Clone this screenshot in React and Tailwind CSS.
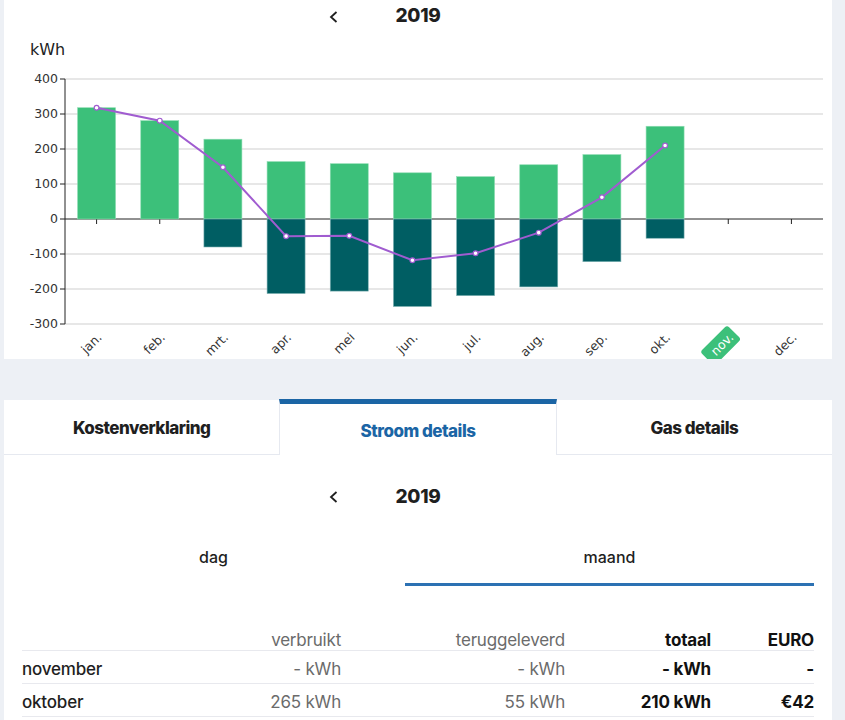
import React from 'react';

const months = ['jan.', 'feb.', 'mrt.', 'apr.', 'mei', 'jun.', 'jul.', 'aug.', 'sep.', 'okt.', 'nov.', 'dec.'];

// monthly kWh: used (up), returned (down)
const used = [318, 281, 228, 164, 158, 132, 121, 155, 184, 265];
const returned = [0, 0, 80, 213, 206, 250, 219, 194, 122, 55];

const X0 = 65;
const X1 = 823;
const SLOT = (X1 - X0) / 12;
const yOf = (v) => 219 - v * 0.35;
const cx = (i) => X0 + SLOT * (i + 0.5);

const font = { fontFamily: '"DejaVu Sans", sans-serif' };

const Chevron = ({ className }) => (
  <svg width="10" height="12" viewBox="0 0 10 12" className={className}>
    <polyline points="7.5,1 2,6 7.5,11" fill="none" stroke="#1f1f1f" strokeWidth="1.8" />
  </svg>
);

const YearNav = () => (
  <div className="flex items-center justify-center gap-[56px]">
    <Chevron />
    <span className="font-['Inter',sans-serif] text-[19px] font-extrabold tracking-[-0.3px] text-[#1f1f1f]">2019</span>
    <span className="invisible w-[10px]" />
  </div>
);

const Chart = () => {
  const net = used.map((u, i) => u - returned[i]);
  const ticks = [400, 300, 200, 100, 0, -100, -200, -300];
  return (
    <svg width="828" height="327" viewBox="4 32 828 327" style={font}>
      <text x="30" y="55" fontSize="16" fill="#222">kWh</text>
      {ticks.map((t) => (
        <g key={t}>
          <line x1={X0} x2={X1} y1={yOf(t)} y2={yOf(t)} stroke={t === 0 ? '#222' : '#cfcfcf'} strokeWidth="1" />
          <line x1={X0 - 5} x2={X0} y1={yOf(t)} y2={yOf(t)} stroke="#222" />
          <text x={X0 - 7} y={yOf(t)} dy="0.35em" textAnchor="end" fontSize="12.5" fill="#333">{t}</text>
        </g>
      ))}
      <line x1={X0} x2={X0} y1={yOf(400)} y2={yOf(-300)} stroke="#222" />
      {months.map((m, i) => (
        <line key={m} x1={cx(i)} x2={cx(i)} y1={219} y2={224} stroke="#222" />
      ))}
      {used.map((u, i) => (
        <g key={i}>
          <rect x={cx(i) - 19} y={yOf(u)} width="38" height={u * 0.35} fill="#3cc07a" stroke="#8fdcb3" strokeWidth="0.6" />
          {returned[i] > 0 && (
            <rect x={cx(i) - 19} y={219} width="38" height={returned[i] * 0.35} fill="#005e63" stroke="#7fb2b4" strokeWidth="0.6" />
          )}
        </g>
      ))}
      <polyline
        points={net.map((v, i) => `${cx(i)},${yOf(v)}`).join(' ')}
        fill="none"
        stroke="#a05cd0"
        strokeWidth="2"
      />
      {net.map((v, i) => (
        <circle key={i} cx={cx(i)} cy={yOf(v)} r="2.4" fill="#fff" stroke="#a05cd0" strokeWidth="1.2" />
      ))}
      {months.map((m, i) => (
        <g key={m} transform={`translate(${cx(i) + 3}, 335) rotate(-45)`}>
          {m === 'nov.' && <rect x="-34" y="-10" width="38" height="20" rx="3" fill="#3cc07a" />}
          <text x="0" y="0" dy="0.35em" textAnchor="end" fontSize="12.5" fill={m === 'nov.' ? '#fff' : '#333'}>
            {m}
          </text>
        </g>
      ))}
    </svg>
  );
};

const rows = [
  { label: 'november', used: '- kWh', ret: '- kWh', total: '- kWh', euro: '-' },
  { label: 'oktober', used: '265 kWh', ret: '55 kWh', total: '210 kWh', euro: '€42' },
];

const tabText = 'text-[17px] font-extrabold tracking-[-0.5px]';

export default function App() {
  return (
    <div className="min-h-[720px] bg-[#edf0f5] pl-[4px] pr-[13px] font-['Inter',sans-serif]">
      {/* chart panel */}
      <div className="bg-white">
        <div className="flex h-[32px] items-center justify-center pt-[1px]">
          <YearNav />
        </div>
        <Chart />
      </div>

      {/* tabs */}
      <div className="mt-[40px] flex h-[56px] items-end">
        <div className={`flex h-[55px] flex-1 items-center justify-center border-b border-[#e6e9f0] bg-white pt-[3px] text-[#1f1f1f] ${tabText}`}>
          Kostenverklaring
        </div>
        <div className={`flex h-[56px] flex-1 items-center justify-center border-x border-t-[5px] border-x-[#e6e9f0] border-t-[#1b65a5] bg-white pt-[4px] text-[#1b65a5] ${tabText}`}>
          Stroom details
        </div>
        <div className={`flex h-[55px] flex-1 items-center justify-center border-b border-[#e6e9f0] bg-white pt-[3px] text-[#1f1f1f] ${tabText}`}>
          Gas details
        </div>
      </div>

      {/* details panel */}
      <div className="bg-white pb-[20px] pl-[18px] pr-[18px] pt-[27px]">
        <div className="flex h-[30px] items-center justify-center">
          <YearNav />
        </div>

        <div className="mt-[18px] flex">
          <div className="flex h-[56px] w-[383px] items-center justify-center border-b-[3px] border-transparent text-[16px] font-medium text-[#1f1f1f]">
            dag
          </div>
          <div className="flex h-[56px] flex-1 items-center justify-center border-b-[3px] border-[#2c71b3] text-[16px] font-medium text-[#1f1f1f]">
            maand
          </div>
        </div>

        <div className="mt-[42px] text-[17px] tracking-[-0.2px]">
          <div className="grid h-[23px] grid-cols-[159px_160px_224px_146px_1fr] items-center border-b border-[#e8e9ee] pb-[1px]">
            <span />
            <span className="text-right text-[#6b6b6b]">verbruikt</span>
            <span className="text-right text-[#6b6b6b]">teruggeleverd</span>
            <span className="text-right font-bold text-[#111]">totaal</span>
            <span className="text-right font-bold text-[#111]">EURO</span>
          </div>
          {rows.map((r) => (
            <div
              key={r.label}
              className="grid h-[33px] grid-cols-[159px_160px_224px_146px_1fr] items-center border-b border-[#e8e9ee] pt-[5px]"
            >
              <span className="font-medium text-[#1f1f1f]">{r.label}</span>
              <span className="text-right text-[#6b6b6b]">{r.used}</span>
              <span className="text-right text-[#6b6b6b]">{r.ret}</span>
              <span className="text-right font-bold text-[#111]">{r.total}</span>
              <span className="text-right font-bold text-[#111]">{r.euro}</span>
            </div>
          ))}
        </div>
      </div>
    </div>
  );
}
